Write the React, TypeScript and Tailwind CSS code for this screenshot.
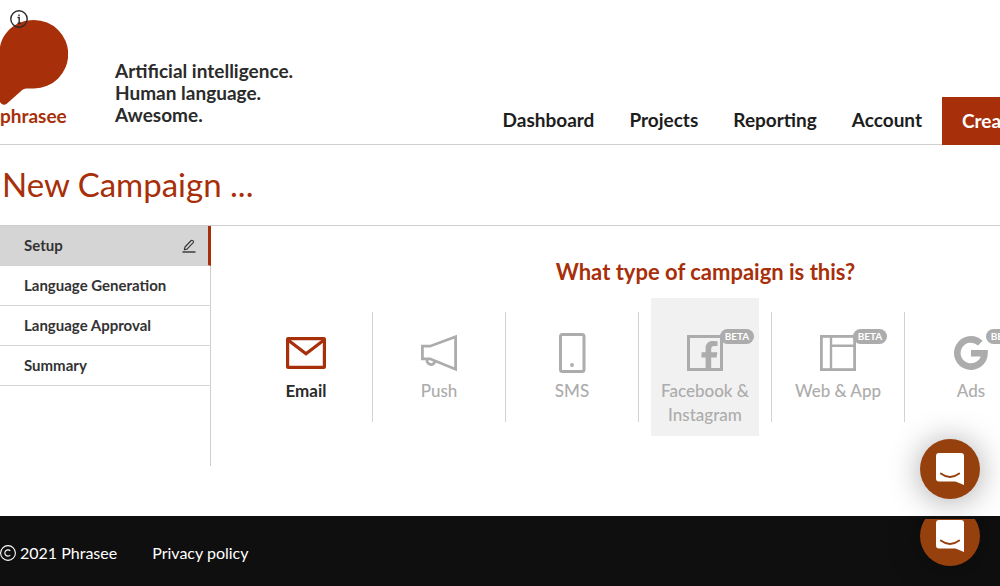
import type { ReactNode } from 'react';

const navLinks = ['Dashboard', 'Projects', 'Reporting', 'Account'];

const steps = ['Setup', 'Language Generation', 'Language Approval', 'Summary'];

function Logo() {
  return (
    <a href="#home" aria-label="Phrasee home" className="flex w-[68px] shrink-0 flex-col text-[#a72f0a]">
      <svg viewBox="0 0 68 86" className="h-[86px] w-[68px]" fill="currentColor" aria-hidden="true">
        <path d="M34 0A34.2 34.2 0 0 1 34 68.400H26C23 69 22 70 20 72L7 83.500C5 85.200 2 85.500 0 82V27C3 11 17 0 34 0Z" />
      </svg>
      <span className="text-[19px] leading-5 font-bold">phrasee</span>
    </a>
  );
}

function InfoIcon() {
  return (
    <svg viewBox="0 0 18 18" className="size-[18px]" fill="none" stroke="#2b2b2b" strokeWidth="1.400" aria-hidden="true">
      <circle cx="9" cy="9" r="8.200" />
      <path d="M7.500 7.500H9.200V13M7.500 13.200H11M9 4.500V6" />
    </svg>
  );
}

function PencilIcon() {
  return (
    <svg viewBox="0 0 14 14" className="size-3.5" fill="none" stroke="#333" strokeWidth="1.100" aria-hidden="true">
      <path d="M2.300 10.800L3 8L9.200 1.500Q10 .9 10.800 1.600L11.300 2.100Q11.900 2.900 11.200 3.600L5 10.100Z" strokeLinejoin="round" />
      <path d="M.5 13H13.500" strokeWidth="1.400" />
    </svg>
  );
}

function EmailIcon() {
  return (
    <svg viewBox="0 0 40 40" className="size-10" fill="none" stroke="#a72f0a" strokeWidth="3.200" aria-hidden="true">
      <rect x="1.600" y="5.600" width="36.800" height="28.800" rx=".5" />
      <path d="M2 7L20 20.800L38 7" />
    </svg>
  );
}

function PushIcon() {
  return (
    <svg viewBox="0 0 40 40" className="size-10" fill="none" stroke="currentColor" strokeWidth="2.800" aria-hidden="true">
      <path d="M3.400 13.200H11L36.600 3.800V36.200L11 25.800H3.400Z" />
      <path d="M8.300 26A4 4 0 1 0 16 27.500" />
    </svg>
  );
}

function PhoneIcon() {
  return (
    <svg viewBox="0 0 40 40" className="size-10" fill="none" stroke="currentColor" strokeWidth="3" aria-hidden="true">
      <rect x="8.500" y="1.500" width="23.500" height="37" rx="2" />
      <circle cx="20" cy="32" r="1.900" fill="currentColor" stroke="none" />
    </svg>
  );
}

function FacebookIcon() {
  return (
    <svg viewBox="0 0 40 40" className="size-10" fill="none" stroke="currentColor" strokeWidth="3" aria-hidden="true">
      <rect x="3.500" y="3.500" width="33" height="33" />
      <path
        d="M20.600 36V24.400H16.500V19.200H20.600V15.600C20.600 10.500 23.300 8 28 8Q30.500 8 32.500 8.300V13H29.800C27 13 26.200 14.200 26.200 16.200V19.200H32.300L31.600 24.400H26.200V36Z"
        fill="currentColor"
        stroke="none"
      />
    </svg>
  );
}

function LayoutIcon() {
  return (
    <svg viewBox="0 0 40 40" className="size-10" fill="none" stroke="currentColor" strokeWidth="2.800" aria-hidden="true">
      <rect x="3.400" y="3.400" width="33.200" height="33.200" />
      <path d="M13 3V37M13 12.800H37" strokeWidth="2.400" />
    </svg>
  );
}

function GoogleIcon() {
  return (
    <svg viewBox="0 0 40 40" className="size-10" fill="none" stroke="currentColor" strokeWidth="6.600" aria-hidden="true">
      <path d="M29.300 10.200A13.600 13.600 0 1 0 33.500 20.200H20" />
    </svg>
  );
}

type Campaign = { label: string; icon: ReactNode; selected?: boolean; beta?: boolean; highlighted?: boolean };

const campaigns: Campaign[] = [
  { label: 'Email', icon: <EmailIcon />, selected: true },
  { label: 'Push', icon: <PushIcon /> },
  { label: 'SMS', icon: <PhoneIcon /> },
  { label: 'Facebook & Instagram', icon: <FacebookIcon />, beta: true, highlighted: true },
  { label: 'Web & App', icon: <LayoutIcon />, beta: true },
  { label: 'Ads', icon: <GoogleIcon />, beta: true },
];

function CampaignCard({ label, icon, selected, beta, highlighted }: Campaign) {
  return (
    <button
      type="button"
      className={`flex h-[138px] w-[108px] flex-col items-center pt-[35px] ${highlighted ? 'bg-[#f1f1f1]' : ''} ${
        selected ? 'font-bold text-[#2b2b2b]' : 'font-medium text-[#acacac]'
      }`}
    >
      <span className="relative">
        {icon}
        {beta && (
          <span className="absolute -top-1 left-[35px] flex h-[15px] w-[34px] items-center justify-center rounded-full bg-[#acacac] text-[10px] font-bold text-white">
            BETA
          </span>
        )}
      </span>
      <span className="mt-1.5 text-[17px] leading-6">{label}</span>
    </button>
  );
}

function ChatButton() {
  return (
    <button
      type="button"
      aria-label="Open chat"
      className="flex size-[60px] items-center justify-center rounded-full bg-[#96400d] shadow-[0_2px_32px_rgba(0,0,0,0.35)]"
    >
      <svg viewBox="0 0 28 32" className="h-8 w-7" aria-hidden="true">
        <path d="M3 0H25A3 3 0 0 1 28 3V32L19.500 28.500H3A3 3 0 0 1 0 25.500V3A3 3 0 0 1 3 0Z" fill="#fff" />
        <path d="M4.800 20.500Q14 27.500 23.200 20.500" fill="none" stroke="#96400d" strokeWidth="1.800" strokeLinecap="round" />
      </svg>
    </button>
  );
}

export default function App() {
  return (
    <div className="min-h-screen overflow-hidden bg-white font-[Lato,sans-serif] text-[#2b2b2b]">
      <div className="min-w-[1200px]">
        <header className="relative flex items-end border-b border-[#cfcfcf] pt-5">
          <button type="button" aria-label="Information" className="absolute top-2.5 left-2.5">
            <InfoIcon />
          </button>
          <div className="pb-[18px]">
            <Logo />
          </div>
          <p className="ml-[47px] pb-[18px] text-[19px] leading-[22px] font-bold">
            Artificial intelligence.
            <br />
            Human language.
            <br />
            Awesome.
          </p>
          <nav className="-mb-px ml-auto flex items-center text-[19px] font-bold text-[#1d1d1d]">
            {navLinks.map((link) => (
              <a key={link} href={`#${link.toLowerCase()}`} className="mr-[35px] pb-0.5 last-of-type:mr-5">
                {link}
              </a>
            ))}
            <button type="button" className="h-12 w-[258px] bg-[#a72f0a] px-5 text-left text-white">
              Create Campaign
            </button>
          </nav>
        </header>

        <main className="pb-[50px]">
          <h1 className="px-0.5 pt-[19px] pb-[21px] text-[33px] leading-10 text-[#a72f0a]">New Campaign ...</h1>
          <div className="flex border-t border-[#cfcfcf]">
            <aside className="min-h-60 w-[211px] shrink-0 border-r border-[#cfcfcf]">
              <ol className="-mr-px text-[15px] font-bold text-[#333]">
                {steps.map((step, index) => (
                  <li key={step}>
                    <a
                      href={`#step-${index + 1}`}
                      className={`flex h-10 items-center justify-between border-b border-[#d5d5d5] pl-6 ${
                        index === 0 ? 'border-r-3 border-r-[#a72f0a] bg-[#d5d5d5] pr-3' : ''
                      }`}
                    >
                      {step}
                      {index === 0 && <PencilIcon />}
                    </a>
                  </li>
                ))}
              </ol>
            </aside>
            <section className="grow px-[29px] pt-8">
              <h2 className="text-center text-[22px] leading-7 font-bold text-[#a72f0a]">What type of campaign is this?</h2>
              <ul className="mt-3 grid grid-cols-7">
                {campaigns.map((campaign) => (
                  <li key={campaign.label} className="flex items-center">
                    <div className="flex grow justify-center">
                      <CampaignCard {...campaign} />
                    </div>
                    <div className={`w-px self-stretch ${campaign.label === 'Ads' ? '' : 'my-3.5 bg-[#d2d2d2]'}`} />
                  </li>
                ))}
              </ul>
            </section>
          </div>
        </main>

        <footer className="flex min-h-[70px] items-center gap-[35px] bg-[#0f0f0f] pt-1 text-base text-white">
          <p className="flex items-center gap-1">
            <svg viewBox="0 0 16 16" className="size-4" fill="none" stroke="currentColor" strokeWidth="1.100" role="img" aria-label="Copyright">
              <circle cx="8" cy="8" r="7.400" />
              <path d="M10.300 6A3.100 3.100 0 1 0 10.300 10" />
            </svg>
            2021 Phrasee
          </p>
          <a href="#privacy">Privacy policy</a>
        </footer>
      </div>

      <div className="fixed right-5 bottom-[87px]">
        <ChatButton />
      </div>
      <div className="fixed right-0 bottom-0 flex h-[67px] items-end overflow-hidden pr-5 pb-5 pl-8">
        <ChatButton />
      </div>
    </div>
  );
}
